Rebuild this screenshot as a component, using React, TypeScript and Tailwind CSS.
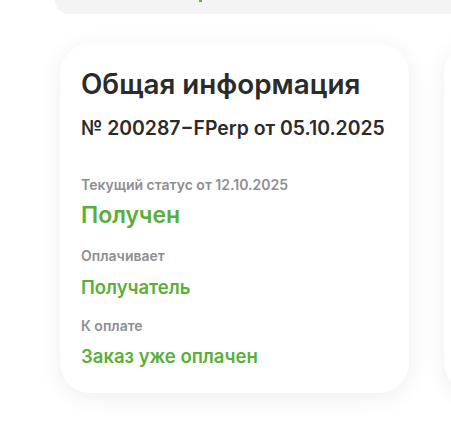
export default function App() {
  const font = { fontFamily: 'Inter, "Noto Sans", sans-serif' };
  return (
    <div className="w-[451px] h-[426px] bg-white overflow-hidden relative" style={font}>
      <div className="ml-[55px] h-[14px] bg-[#f4f4f4] rounded-bl-[14px] relative">
        <div className="absolute left-[144px] top-0 w-[3px] h-[2px] bg-[#5db43a]" />
      </div>
      <div className="flex gap-[35px] mt-[30px] ml-[60px]">
        <div className="w-[349px] h-[349px] shrink-0 bg-white rounded-[30px] shadow-[0_4px_24px_rgba(0,0,0,0.07)] pl-[21px] pt-[24px]">
          <div className="text-[27.8px] leading-[32px] font-semibold text-[#2b2b2b]">Общая информация</div>
          <div className="mt-[17px] text-[19.4px] leading-[22px] font-semibold text-[#2b2b2b]">№ 200287−FPerp от 05.10.2025</div>
          <div className="mt-[38px] text-[14px] leading-[16px] font-semibold text-[#8e8e93]">Текущий статус от 12.10.2025</div>
          <div className="mt-[9px] text-[23px] leading-[26px] font-semibold text-[#5aaf3a]">Получен</div>
          <div className="mt-[20px] text-[14px] leading-[16px] font-semibold text-[#8e8e93]">Оплачивает</div>
          <div className="mt-[12px] text-[18.5px] leading-[22px] font-semibold text-[#5aaf3a]">Получатель</div>
          <div className="mt-[20px] text-[14px] leading-[16px] font-semibold text-[#8e8e93]">К оплате</div>
          <div className="mt-[11px] text-[18.5px] leading-[22px] font-semibold text-[#5aaf3a]">Заказ уже оплачен</div>
        </div>
        <div className="w-[349px] h-[349px] shrink-0 bg-white rounded-[30px] shadow-[0_4px_24px_rgba(0,0,0,0.07)]" />
      </div>
    </div>
  );
}
